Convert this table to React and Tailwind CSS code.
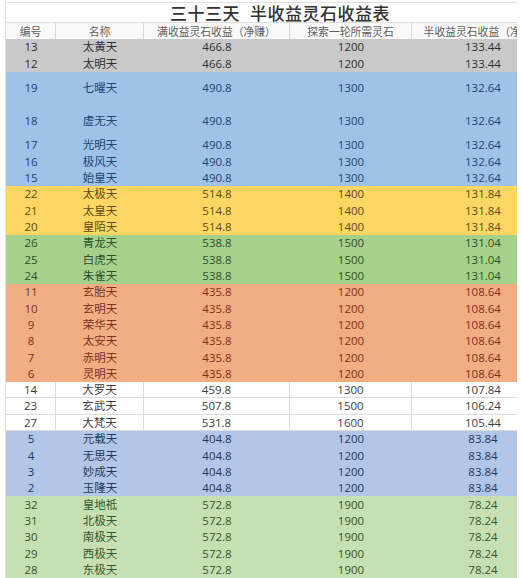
import React from "react";

const COLS = "grid grid-cols-[50px_88px_146px_122px_142px]";

const groups = [
  {
    bg: "bg-[#c9c9c9]",
    fg: "text-[#2f2f2f]",
    rows: [
      ["13", "太黄天", "466.8", "1200", "133.44"],
      ["12", "太明天", "466.8", "1200", "133.44"],
    ],
  },
  {
    bg: "bg-[#9ec2e8]",
    fg: "text-[#23446e]",
    tall: 2,
    rows: [
      ["19", "七曜天", "490.8", "1300", "132.64"],
      ["18", "虚无天", "490.8", "1300", "132.64"],
      ["17", "光明天", "490.8", "1300", "132.64"],
      ["16", "极风天", "490.8", "1300", "132.64"],
      ["15", "始皇天", "490.8", "1300", "132.64"],
    ],
  },
  {
    bg: "bg-[#fdd663]",
    fg: "text-[#5e4a12]",
    rows: [
      ["22", "太极天", "514.8", "1400", "131.84"],
      ["21", "太皇天", "514.8", "1400", "131.84"],
      ["20", "皇陌天", "514.8", "1400", "131.84"],
    ],
  },
  {
    bg: "bg-[#a8d08d]",
    fg: "text-[#2a5226]",
    rows: [
      ["26", "青龙天", "538.8", "1500", "131.04"],
      ["25", "白虎天", "538.8", "1500", "131.04"],
      ["24", "朱雀天", "538.8", "1500", "131.04"],
    ],
  },
  {
    bg: "bg-[#f3ad82]",
    fg: "text-[#7e3018]",
    rows: [
      ["11", "玄胎天", "435.8", "1200", "108.64"],
      ["10", "玄明天", "435.8", "1200", "108.64"],
      ["9", "荣华天", "435.8", "1200", "108.64"],
      ["8", "太安天", "435.8", "1200", "108.64"],
      ["7", "赤明天", "435.8", "1200", "108.64"],
      ["6", "灵明天", "435.8", "1200", "108.64"],
    ],
  },
  {
    bg: "bg-white",
    fg: "text-[#3d3d3d]",
    grid: true,
    rows: [
      ["14", "大罗天", "459.8", "1300", "107.84"],
      ["23", "玄武天", "507.8", "1500", "106.24"],
      ["27", "大梵天", "531.8", "1600", "105.44"],
    ],
  },
  {
    bg: "bg-[#b4c6e8]",
    fg: "text-[#24355e]",
    rows: [
      ["5", "元载天", "404.8", "1200", "83.84"],
      ["4", "无思天", "404.8", "1200", "83.84"],
      ["3", "妙成天", "404.8", "1200", "83.84"],
      ["2", "玉隆天", "404.8", "1200", "83.84"],
    ],
  },
  {
    bg: "bg-[#c6e0b3]",
    fg: "text-[#33542a]",
    rows: [
      ["32", "皇地祗", "572.8", "1900", "78.24"],
      ["31", "北极天", "572.8", "1900", "78.24"],
      ["30", "南极天", "572.8", "1900", "78.24"],
      ["29", "西极天", "572.8", "1900", "78.24"],
      ["28", "东极天", "572.8", "1900", "78.24"],
    ],
  },
];

const font = {
  fontFamily: '"Open Sans", "Noto Sans CJK SC", sans-serif',
};

function Row({ cells, fg, tall, grid }) {
  return (
    <div
      className={`${COLS} ${fg} ${tall ? "h-[32.7px]" : "h-[16.33px]"} ${
        grid ? "border-b border-[#dcdcdc]" : ""
      } text-[11.5px] leading-none`}
    >
      {cells.map((c, i) => (
        <div
          key={i}
          className={`flex items-center justify-center ${
            grid && i < 4 ? "border-r border-[#dcdcdc]" : ""
          }`}
        >
          {c}
        </div>
      ))}
    </div>
  );
}

export default function App() {
  return (
    <div
      className="w-[522px] h-[578px] bg-white overflow-hidden pt-[2px] pl-[5px]"
      style={font}
    >
      <div className="w-[512px] h-[576px] overflow-hidden border-l border-t border-[#e2e2e2]">
        <div className="w-[548px]">
          <div className="h-[20px] flex items-center justify-center border-b border-[#dcdcdc] text-[17px] leading-none font-medium text-[#333] tracking-[0.5px] pt-[2px]">
            三十三天&nbsp;&nbsp;半收益灵石收益表
          </div>
          <div
            className={`${COLS} h-[16px] bg-[#f9f9f9] text-[10.8px] text-[#606060] leading-none`}
          >
            {[
              "编号",
              "名称",
              "满收益灵石收益（净赚）",
              "探索一轮所需灵石",
              "半收益灵石收益（净赚）",
            ].map((h, i) => (
              <div
                key={i}
                className={`flex items-center justify-center whitespace-nowrap pt-[2px] ${
                  i < 4 ? "border-r border-[#dadada]" : ""
                }`}
              >
                {h}
              </div>
            ))}
          </div>
          {groups.map((g, gi) => (
            <div key={gi} className={g.bg}>
              {g.rows.map((r, ri) => (
                <Row
                  key={ri}
                  cells={r}
                  fg={g.fg}
                  tall={g.tall && ri < g.tall}
                  grid={g.grid}
                />
              ))}
            </div>
          ))}
        </div>
      </div>
    </div>
  );
}
